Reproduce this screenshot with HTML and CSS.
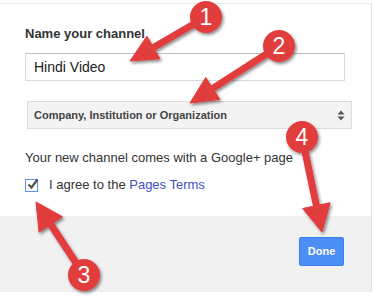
FILE: index.html
```html
<!DOCTYPE html>
<html>
<head>
<meta charset="utf-8">
<link rel="stylesheet" href="styles.css">
</head>
<body>
<div class="dialog">
  <div class="content">
    <div class="heading">Name your channel</div>
    <div class="input">Hindi Video</div>
    <div class="select">
      <span>Company, Institution or Organization</span>
      <svg class="arrows" width="8" height="11" viewBox="0 0 8 11"><path d="M0.5 4.5 L4 0.5 L7.5 4.5 Z M0.5 6.5 L4 10.5 L7.5 6.5 Z" fill="#555"/></svg>
    </div>
    <div class="note">Your new channel comes with a Google+ page</div>
    <div class="agree">
      <span class="checkbox"><svg width="13" height="13" viewBox="0 0 13 13"><path d="M2.5 6.5 L5.5 9.5 L11.5 1.5" fill="none" stroke="#555" stroke-width="2.2"/></svg></span>
      <span class="agree-text">I agree to the <span class="link">Pages Terms</span></span>
    </div>
  </div>
  <div class="footer">
    <div class="done">Done</div>
  </div>
</div>
<svg class="annot" width="374" height="296" viewBox="0 0 374 296">
  <defs>
    <filter id="sh" x="-30%" y="-30%" width="160%" height="160%">
      <feDropShadow dx="1.5" dy="2" stdDeviation="1.8" flood-color="#000" flood-opacity="0.45"/>
    </filter>
  </defs>
  <g filter="url(#sh)" fill="#e23c3c" stroke="#e23c3c">
    <line x1="206" y1="17" x2="153.4" y2="47.5" stroke-width="7"/>
    <polygon points="130,61 146.9,36.2 159.9,58.8" stroke-width="1" stroke-linejoin="round"/>
    <line x1="279" y1="46" x2="212.7" y2="88.4" stroke-width="7"/>
    <polygon points="190,103 205.7,77.5 219.7,99.3" stroke-width="1" stroke-linejoin="round"/>
    <line x1="302" y1="137" x2="316.4" y2="205.6" stroke-width="7"/>
    <polygon points="322,232 330.1,202.7 302.7,208.5" stroke-width="1" stroke-linejoin="round"/>
    <line x1="84" y1="275" x2="50.8" y2="224.5" stroke-width="7"/>
    <polygon points="36,202 62.5,216.8 39.1,232.2" stroke-width="1" stroke-linejoin="round"/>
    <circle cx="206" cy="17" r="16" stroke="none"/>
    <circle cx="279" cy="46" r="16" stroke="none"/>
    <circle cx="302" cy="137" r="16" stroke="none"/>
    <circle cx="84" cy="275" r="16" stroke="none"/>
  </g>
  <g class="nums" fill="#fff" text-anchor="middle">
    <text x="206" y="25">1</text>
    <text x="279" y="54">2</text>
    <text x="302" y="145">4</text>
    <text x="84" y="283">3</text>
  </g>
</svg>
</body>
</html>
```
FILE: styles.css
```css
html, body {
  margin: 0;
  padding: 0;
  background: #fff;
}
body {
  position: relative;
  width: 374px;
  height: 296px;
  overflow: hidden;
  font-family: Arial, "Liberation Sans", sans-serif;
  color: #333;
}
.dialog {
  margin-top: 3px;
  width: 371px;
  border-top: 1px solid #e8e8e8;
  border-right: 1px solid #e2e2e2;
}
.content {
  height: 190px;
  padding: 22px 0 0 25px;
}
.heading {
  font-size: 13px;
  font-weight: bold;
  line-height: 16px;
  color: #333;
}
.input {
  margin-top: 11px;
  width: 318px;
  height: 26px;
  border: 1px solid #d9d9d9;
  border-top-color: #c0c0c0;
  padding-left: 8px;
  box-sizing: content-box;
  width: 310px;
  font-size: 14px;
  line-height: 26px;
  color: #222;
}
.select {
  margin-top: 20px;
  margin-left: 2px;
  width: 317px;
  height: 26px;
  border: 1px solid #dcdcdc;
  background: #f3f3f3;
  padding-left: 6px;
  display: flex;
  align-items: center;
  justify-content: space-between;
  font-size: 11px;
  font-weight: bold;
  color: #444;
}
.arrows {
  margin-right: 6px;
}
.note {
  margin-top: 21px;
  font-size: 13px;
  line-height: 16px;
  color: #333;
}
.agree {
  margin-top: 11px;
  display: flex;
  align-items: center;
  height: 16px;
}
.checkbox {
  width: 11px;
  height: 11px;
  border: 1px solid #5b8ff0;
  background: #fff;
  position: relative;
  display: block;
}
.checkbox svg {
  position: absolute;
  left: 0;
  top: -2px;
}
.agree-text {
  margin-left: 11px;
  font-size: 13px;
  line-height: 16px;
  color: #333;
}
.link {
  color: #3f4fc9;
}
.footer {
  height: 76px;
  background: #f1f1f1;
  display: flex;
  justify-content: flex-end;
  align-items: flex-start;
  padding: 21px 27px 0 0;
  box-sizing: border-box;
}
.done {
  width: 43px;
  height: 27px;
  border: 1px solid #3a80ee;
  border-radius: 2px;
  background: #4a8ef6;
  color: #fff;
  font-size: 11px;
  font-weight: bold;
  line-height: 27px;
  text-align: center;
}
.annot {
  position: absolute;
  left: 0;
  top: 0;
  pointer-events: none;
}
.nums text {
  font-family: Arial, "Liberation Sans", sans-serif;
  font-size: 23px;
}
```
